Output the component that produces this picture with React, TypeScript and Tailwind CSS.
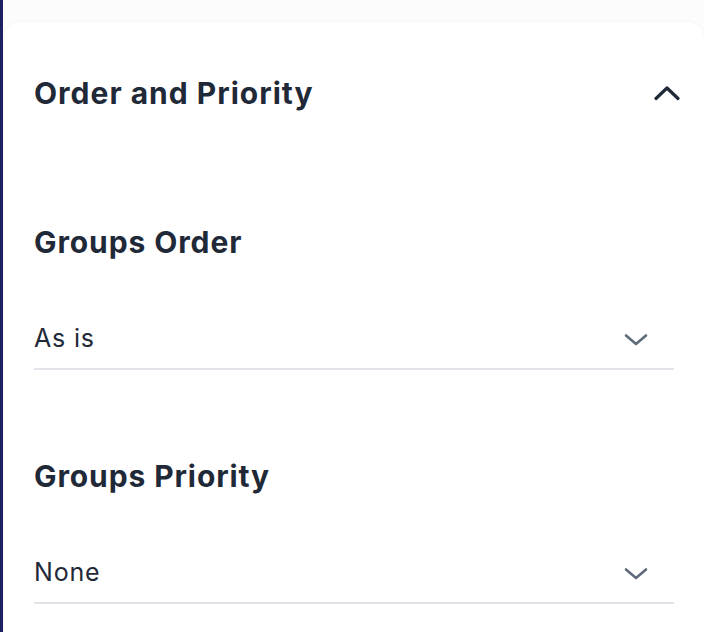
import React from 'react'

interface SelectProps {
  label: string
  value: string
}

function ChevronDown() {
  return (
    <svg width="24" height="14" viewBox="0 0 24 14" fill="none" className="mt-[3px]">
      <path d="M2 2.5L12 11L22 2.5" stroke="#5f6b7a" strokeWidth="2.6" strokeLinecap="round" strokeLinejoin="round" />
    </svg>
  )
}

function ChevronUp() {
  return (
    <svg width="26" height="16" viewBox="0 0 26 16" fill="none">
      <path d="M2 13.5L13 3L24 13.5" stroke="#1f2937" strokeWidth="3.2" strokeLinecap="round" strokeLinejoin="round" />
    </svg>
  )
}

function SelectField(props: SelectProps) {
  return (
    <div className="flex flex-col">
      <h3 className="text-[30px] leading-[36px] font-bold tracking-[0.9px] text-[#1f2937]">{props.label}</h3>
      <div className="mt-[63px] flex items-center justify-between border-b-2 border-[#e1e4e8] pb-[15px] pr-[26px]">
        <span className="text-[25px] leading-[30px] tracking-[0.8px] text-[#1f2937]">{props.value}</span>
        <ChevronDown />
      </div>
    </div>
  )
}

export default function App() {
  return (
    <div
      className="w-[704px] h-[632px] overflow-hidden bg-[#fcfcfc] border-l-[3px] border-[#1c2161] pt-[22px]"
      style={{ fontFamily: 'Inter, "Noto Sans", sans-serif' }}
    >
      <div className="h-full ml-px rounded-t-2xl bg-white shadow-[0_0_3px_rgba(0,0,0,0.06)] pl-[30px] pr-[30px]">
        <div className="flex items-center justify-between pt-[53px]">
          <h2 className="text-[30px] leading-[36px] font-bold tracking-[1px] text-[#1f2937]">Order and Priority</h2>
          <div className="-mr-[6px]">
            <ChevronUp />
          </div>
        </div>
        <div className="mt-[113px] flex flex-col gap-[88px]">
          <SelectField label="Groups Order" value="As is" />
          <SelectField label="Groups Priority" value="None" />
        </div>
      </div>
    </div>
  )
}
